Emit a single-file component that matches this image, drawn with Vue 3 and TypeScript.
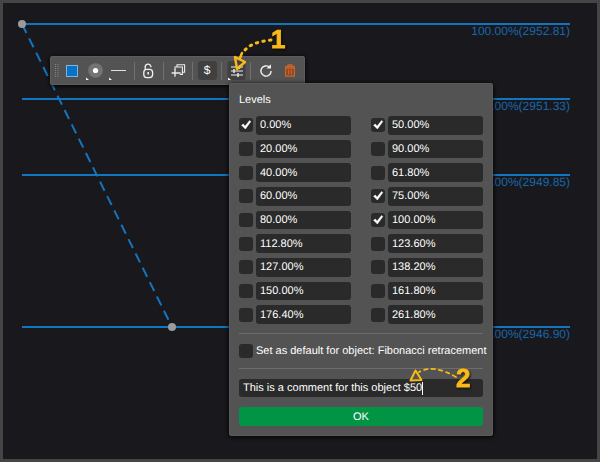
<script setup lang="ts">
import { reactive, ref } from 'vue'

interface Level {
  value: string
  on: boolean
}

const make = (value: string, on = false): Level => ({ value, on })

// Listed row by row: left column entry, then right column entry.
const levels = reactive<Level[]>([
  make('0.00%', true), make('50.00%', true),
  make('20.00%'), make('90.00%'),
  make('40.00%'), make('61.80%'),
  make('60.00%'), make('75.00%', true),
  make('80.00%'), make('100.00%', true),
  make('112.80%'), make('123.60%'),
  make('127.00%'), make('138.20%'),
  make('150.00%'), make('161.80%'),
  make('176.40%'), make('261.80%'),
])

const lines = [
  { y: 24, label: '100.00%(2952.81)' },
  { y: 99, label: '75.00%(2951.33)' },
  { y: 175, label: '50.00%(2949.85)' },
  { y: 327, label: '0.00%(2946.90)' },
]

const asDefault = ref(false)
const comment = ref('This is a comment for this object $50')
</script>

<template>
  <main class="chart">
    <svg class="plot" aria-hidden="true">
      <g v-for="l in lines" :key="l.y">
        <line class="level" x1="22" :y1="l.y" x2="95%" :y2="l.y" />
        <text class="price" x="95%" :y="l.y + 11" text-anchor="end">{{ l.label }}</text>
      </g>
      <line class="trend" x1="22" y1="24" x2="172" y2="327" />
      <circle class="anchor" cx="22" cy="24" r="4" />
      <circle class="anchor" cx="172" cy="327" r="4" />
    </svg>

    <div class="toolbar" role="toolbar" aria-label="Object tools">
      <svg class="grip" width="4" height="14" viewBox="0 0 4 14">
        <path d="M0.5 0v14M3 0v14" stroke="#858585" stroke-width="1" stroke-dasharray="1 1" />
      </svg>
      <button class="tool" type="button" aria-label="Color">
        <svg width="24" height="22" viewBox="0 0 24 22">
          <rect x="6.5" y="5.5" width="11" height="11" fill="#0673c6" stroke="#7db3dc" />
        </svg>
      </button>
      <button class="tool" type="button" aria-label="Point size">
        <svg width="24" height="22" viewBox="0 0 24 22">
          <circle cx="11.5" cy="10.5" r="7.3" fill="#747474" />
          <circle cx="11.5" cy="10.5" r="2.6" fill="#fff" />
          <path d="M2 17.5v2.5h3z" fill="#fff" />
        </svg>
      </button>
      <button class="tool" type="button" aria-label="Line style">
        <svg width="24" height="22" viewBox="0 0 24 22">
          <path d="M3 10.5h15" stroke="#e0e0e0" />
          <path d="M1 17.5v2.5h3z" fill="#fff" />
        </svg>
      </button>
      <i class="sep"></i>
      <button class="tool" type="button" aria-label="Lock">
        <svg width="24" height="22" viewBox="0 0 24 22" fill="none" stroke="#f2f2f2" stroke-width="1.3">
          <rect x="6.8" y="9.4" width="8.8" height="8.2" rx="3" />
          <path d="M8.2 9.8V7.2a2.9 2.9 0 0 1 5.7-0.9v1" />
          <path d="M11.2 12v2.6" stroke-width="1.5" />
        </svg>
      </button>
      <i class="sep"></i>
      <button class="tool" type="button" aria-label="Clone">
        <svg width="24" height="22" viewBox="0 0 24 22" fill="none" stroke="#ededed" stroke-width="1.1">
          <path d="M9 9.5V7h7.4v7.4h-2.6" />
          <path d="M11 7V4.7h7.6v7.6h-2.2" />
          <path d="M9 9v7.8M5.6 13h9" stroke-width="1.3" />
        </svg>
      </button>
      <i class="sep"></i>
      <button class="tool" type="button" aria-label="Price">
        <span class="active">$</span>
      </button>
      <i class="sep"></i>
      <button class="tool" type="button" aria-label="Settings">
        <svg width="24" height="22" viewBox="0 0 24 22" fill="none" stroke="#ededed" stroke-width="1.2">
          <rect x="3.5" y="1" width="18" height="19" rx="2" fill="#404040" stroke="none" />
          <path d="M7 7h12M7 11h12M7 15h12" />
          <path d="M15.5 5v4M10 9v4M14 13v4" stroke-width="1.4" />
          <path d="M4 17.5v2.5h3z" fill="#fff" stroke="none" />
        </svg>
      </button>
      <i class="sep"></i>
      <button class="tool" type="button" aria-label="Reset">
        <svg width="24" height="22" viewBox="0 0 24 22">
          <path d="M16.4 7.2A5.1 5.1 0 1 0 18.1 11" fill="none" stroke="#f2f2f2" stroke-width="1.4" />
          <path d="M18 4.2v4.4h-4.4z" fill="#f2f2f2" />
        </svg>
      </button>
      <button class="tool" type="button" aria-label="Delete">
        <svg width="24" height="22" viewBox="0 0 24 22" fill="none" stroke="#cf6325" stroke-width="1.3">
          <path d="M8.6 8h8.8v8.2h-8.8z" fill="#80492c" />
          <path d="M8 6.6h10M11 6.4V5h4v1.4M11.6 9.4v5.2M14.4 9.4v5.2" />
        </svg>
      </button>
    </div>

    <form class="panel" @submit.prevent>
      <h1 class="title">Levels</h1>
      <div class="levels">
        <div v-for="(l, i) in levels" :key="i" class="row">
          <span class="tick">
            <input v-model="l.on" type="checkbox" :aria-label="'Show level ' + l.value" />
            <svg v-if="l.on" viewBox="0 0 14 14"><path d="M2.6 7.2 4.4 6 6 8.2 10.6 2.6 11.8 3.6 6.4 11z" /></svg>
          </span>
          <input v-model="l.value" class="field" type="text" aria-label="Level value" />
        </div>
      </div>
      <hr />
      <label class="default">
        <span class="tick">
          <input v-model="asDefault" type="checkbox" />
          <svg v-if="asDefault" viewBox="0 0 14 14"><path d="M2.6 7.2 4.4 6 6 8.2 10.6 2.6 11.8 3.6 6.4 11z" /></svg>
        </span>
        <span>Set as default for object: Fibonacci retracement</span>
      </label>
      <hr />
      <label class="comment">
        <input v-model="comment" type="text" aria-label="Comment" />
        <i class="caret"></i>
      </label>
      <button class="ok" type="submit">OK</button>
    </form>

    <svg class="notes" width="600" height="462" viewBox="0 0 600 462">
      <g fill="none" stroke="#f9b918" stroke-linecap="round" stroke-linejoin="round">
        <path d="M271 40Q252 42 245 50" stroke-width="3" stroke-dasharray="1.5 5.2" />
        <path d="M242 53 240 58" stroke-width="2.5" />
        <path d="M235 57 245 62 237 69z" stroke-width="2.4" />
        <path d="M456 377Q434 364 419 372" stroke-width="1.8" stroke-dasharray="3.5 4" />
        <path d="M415.5 370.5 421.5 380 410.5 380.5z" stroke-width="2" />
      </g>
      <g class="digit">
        <text x="271" y="48">1</text>
        <text x="456" y="387">2</text>
      </g>
    </svg>
  </main>
</template>

<style>
body {
  margin: 0;
  background: #18181d;
}
</style>

<style scoped>
.chart {
  position: relative;
  box-sizing: border-box;
  min-height: 100vh;
  border: 3px solid #454545;
  background: #18181d;
  color: #fff;
  font: 11px/14px "Liberation Sans", Arial, sans-serif;
  text-rendering: geometricPrecision;
  overflow: hidden;
}
.plot,
.notes {
  position: absolute;
  left: -3px;
  top: -3px;
}
.plot {
  width: calc(100% + 6px);
  height: calc(100% + 6px);
}
.notes {
  pointer-events: none;
}
.level {
  stroke: #1375bd;
  stroke-width: 2;
}
.trend {
  stroke: #1375bd;
  stroke-width: 2;
  stroke-dasharray: 10 6;
}
.anchor {
  fill: #9b9b9b;
}
.price {
  fill: #1a66a8;
  font-size: 12px;
}
.digit {
  fill: #f9b918;
  stroke: #f9b918;
  stroke-width: 0.8;
  font-size: 26px;
  font-weight: bold;
  filter: drop-shadow(1px 1px 1px rgba(0, 0, 0, 0.7));
}
.toolbar {
  position: absolute;
  left: 47px;
  top: 53px;
  display: flex;
  align-items: center;
  height: 29px;
  padding: 0 4px 0 5px;
  border-radius: 3px;
  background: #535353;
  box-shadow: inset 0 0 0 1px #5d5d5d, 0 1px 4px #000;
}
.grip {
  margin-right: 1px;
}
.tool {
  display: flex;
  align-items: center;
  justify-content: center;
  width: 24px;
  height: 22px;
  padding: 0;
  border: 0;
  background: none;
  color: #fff;
}
.active {
  width: 19px;
  border-radius: 3px;
  background: #404040;
  font: 12px/19px "Liberation Sans", Arial, sans-serif;
}
.sep {
  width: 1px;
  height: 18px;
  margin: 0 2px;
  background: #707070;
}
.panel {
  position: absolute;
  left: 226px;
  top: 80px;
  box-sizing: border-box;
  width: 264px;
  padding: 10px;
  border-radius: 3px;
  background: #535353;
  box-shadow: inset 0 0 0 1px #5a5a5a, 0 1px 5px #000;
}
.title {
  margin: 0 0 9px;
  font: inherit;
}
.levels {
  display: grid;
  grid-template-columns: repeat(2, minmax(0, 1fr));
  grid-auto-rows: 1fr;
  gap: 5px 20px;
  height: 208px;
}
.row {
  display: flex;
  align-items: center;
  gap: 3px;
  min-height: 0;
}
.tick {
  display: grid;
  flex: none;
  width: 14px;
  height: 14px;
}
.tick > * {
  grid-area: 1 / 1;
}
.tick input {
  appearance: none;
  width: 14px;
  height: 14px;
  margin: 0;
  border-radius: 3px;
  background: #2a2a2a;
}
.tick svg {
  fill: #fff;
  stroke: #fff;
  stroke-width: 0.5;
  pointer-events: none;
}
input,
button {
  text-rendering: inherit;
}
.field {
  box-sizing: border-box;
  flex: 1;
  width: 0;
  min-width: 0;
  height: 100%;
  padding: 0 4px;
  border: 0;
  border-radius: 3px;
  background: #2a2a2a;
  color: inherit;
  font: inherit;
}
hr {
  height: 1px;
  margin: 9px 0 10px;
  border: 0;
  background: #6d6d6d;
}
.default {
  display: flex;
  gap: 3px;
  height: 15px;
  white-space: nowrap;
}
.comment {
  display: flex;
  align-items: center;
  height: 18px;
  padding: 0 4px;
  border-radius: 3px;
  background: #2a2a2a;
}
.comment input {
  field-sizing: content;
  padding: 0;
  border: 0;
  outline: 0;
  background: none;
  color: inherit;
  font: inherit;
  caret-color: transparent;
}
.caret {
  width: 1px;
  height: 13px;
  background: #fff;
}
.ok {
  display: block;
  width: 100%;
  height: 19px;
  margin-top: 10px;
  padding: 0;
  border: 0;
  border-radius: 3px;
  background: #009444;
  color: #fff;
  font: inherit;
}
</style>
